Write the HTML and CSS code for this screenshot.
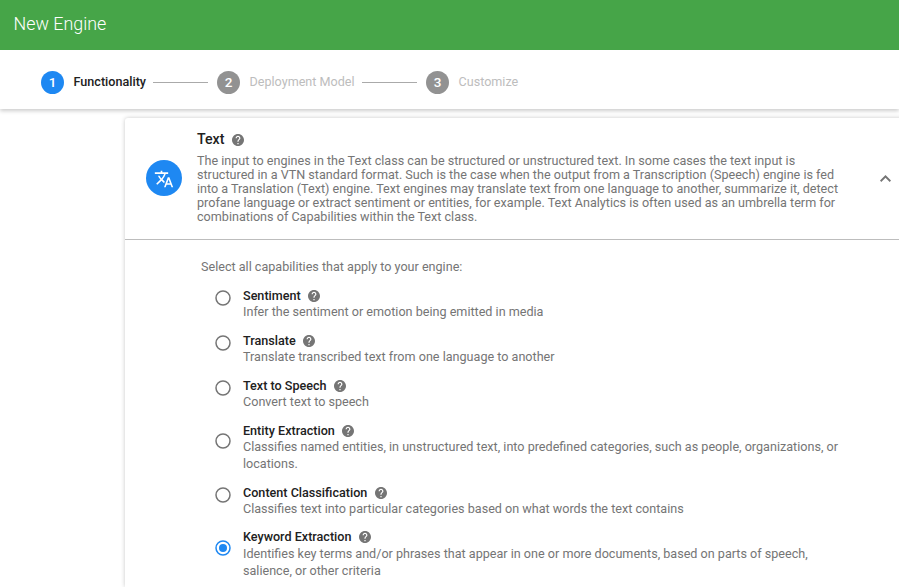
FILE: index.html
```html
<!DOCTYPE html>
<html lang="en">
<head>
<meta charset="utf-8">
<title>New Engine</title>
<link rel="stylesheet" href="styles.css">
</head>
<body>
<svg width="0" height="0" class="defs">
  <symbol id="help" viewBox="2 2 20 20"><path d="M12 2C6.48 2 2 6.48 2 12s4.48 10 10 10 10-4.48 10-10S17.52 2 12 2zm1 17h-2v-2h2v2zm2.07-7.75l-.9.92C13.45 12.9 13 13.5 13 15h-2v-.5c0-1.1.45-2.1 1.17-2.83l1.24-1.26c.37-.36.59-.86.59-1.41 0-1.1-.9-2-2-2s-2 .9-2 2H8c0-2.21 1.79-4 4-4s4 1.79 4 4c0 .88-.36 1.68-.93 2.25z"/></symbol>
</svg>
<header class="topbar"><h1>New Engine</h1></header>
<nav class="stepper">
  <span class="num active">1</span><span class="label current">Functionality</span><span class="line"></span>
  <span class="num">2</span><span class="label deploy">Deployment Model</span><span class="line"></span>
  <span class="num">3</span><span class="label">Customize</span>
</nav>
<main class="card">
  <section class="summary">
    <div class="avatar"><svg viewBox="0 0 24 24"><path d="M12.87 15.07l-2.54-2.51.03-.03c1.74-1.94 2.98-4.17 3.71-6.53H17V4h-7V2H8v2H1v1.99h11.17C11.5 7.92 10.44 9.75 9 11.35 8.07 10.32 7.3 9.19 6.69 8h-2c.73 1.63 1.73 3.17 2.98 4.56l-5.09 5.02L4 19l5-5 3.11 3.11.76-2.04zM18.5 10h-2L12 22h2l1.12-3h4.75L21 22h2l-4.5-12zm-2.62 7l1.62-4.33L19.12 17h-3.24z"/></svg></div>
    <div class="intro">
      <h2><span>Text</span><svg class="help"><use href="#help"/></svg></h2>
      <p>The input to engines in the Text class can be structured or unstructured text. In some cases the text input is<br>structured in a VTN standard format. Such is the case when the output from a Transcription (Speech) engine is fed<br>into a Translation (Text) engine. Text engines may translate text from one language to another, summarize it, detect<br>profane language or extract sentiment or entities, for example. Text Analytics is often used as an umbrella term for<br>combinations of Capabilities within the Text class.</p>
    </div>
    <svg class="chevron" viewBox="6 8 12 7.4"><path d="M12 8l-6 6 1.41 1.41L12 10.83l4.59 4.58L18 14z"/></svg>
  </section>
  <section class="capabilities">
    <p class="prompt">Select all capabilities that apply to your engine:</p>
    <div class="option"><svg class="radio" viewBox="0 0 16 16"><circle cx="8" cy="8" r="7"/></svg><div><h3><span>Sentiment</span><svg class="help"><use href="#help"/></svg></h3><p>Infer the sentiment or emotion being emitted in media</p></div></div>
    <div class="option"><svg class="radio" viewBox="0 0 16 16"><circle cx="8" cy="8" r="7"/></svg><div><h3><span>Translate</span><svg class="help"><use href="#help"/></svg></h3><p>Translate transcribed text from one language to another</p></div></div>
    <div class="option"><svg class="radio" viewBox="0 0 16 16"><circle cx="8" cy="8" r="7"/></svg><div><h3><span>Text to Speech</span><svg class="help"><use href="#help"/></svg></h3><p>Convert text to speech</p></div></div>
    <div class="option tall"><svg class="radio" viewBox="0 0 16 16"><circle cx="8" cy="8" r="7"/></svg><div><h3><span>Entity Extraction</span><svg class="help"><use href="#help"/></svg></h3><p>Classifies named entities, in unstructured text, into predefined categories, such as people, organizations, or<br>locations.</p></div></div>
    <div class="option"><svg class="radio" viewBox="0 0 16 16"><circle cx="8" cy="8" r="7"/></svg><div><h3><span>Content Classification</span><svg class="help"><use href="#help"/></svg></h3><p>Classifies text into particular categories based on what words the text contains</p></div></div>
    <div class="option tall last"><svg class="radio checked" viewBox="0 0 16 16"><circle cx="8" cy="8" r="7"/><circle class="dot" cx="8" cy="8" r="4"/></svg><div><h3><span>Keyword Extraction</span><svg class="help"><use href="#help"/></svg></h3><p>Identifies key terms and/or phrases that appear in one or more documents, based on parts of speech,<br>salience, or other criteria</p></div></div>
  </section>
</main>
</body>
</html>
```
FILE: styles.css
```css
* { box-sizing: border-box; }
html, body { height: 100%; }
body {
  margin: 0;
  display: flex;
  flex-direction: column;
  overflow: hidden;
  background: #fff;
  color: #212121;
  font-family: Roboto, sans-serif;
  font-size: 12.6px;
}
h1, h2, h3, p { margin: 0; }
.defs { display: none; }
.topbar {
  flex: none;
  height: 50px;
  padding: 0 13.5px 3px;
  display: flex;
  align-items: center;
  background: #46a548;
  color: #fff;
}
h1 { font-size: 17.9px; font-weight: 350; }
.stepper {
  flex: none;
  height: 59px;
  padding: 5px 0 0 41px;
  display: flex;
  align-items: center;
  background: #fff;
  box-shadow: 0 2px 4px rgba(0, 0, 0, .2);
  clip-path: inset(0 0 -10px 0);
  z-index: 1;
}
.num {
  width: 23px;
  height: 23px;
  border-radius: 50%;
  background: #929292;
  color: #fff;
  font-size: 13.5px;
  font-weight: 500;
  line-height: 23px;
  text-align: center;
}
.num.active { background: #1e88f2; }
.label { margin: -2px 0 0 9.5px; color: #bdbdbd; white-space: nowrap; }
.label.current { width: 72.5px; color: #212121; font-weight: 500; }
.label.deploy { width: 105.5px; }
.line { width: 55px; height: 1px; margin: 0 9px 0 7px; background: #aaa; }
.card {
  flex: 1;
  min-height: 0;
  width: 790px;
  margin: 9px 0 0 125px;
  border-radius: 3px 3px 0 0;
  background: #fff;
  box-shadow: 0 0 4px rgba(0, 0, 0, .22);
}
.summary {
  height: 122px;
  padding: 11px 0 0 21px;
  display: flex;
  border-bottom: 1px solid #bdbdbd;
}
.avatar {
  width: 36px;
  height: 36px;
  margin-top: 31px;
  border-radius: 50%;
  background: #1e88f2;
  display: grid;
  place-items: center;
}
.avatar svg { width: 20px; height: 20px; margin-top: 1px; fill: #fff; }
.intro { width: 683px; margin-left: 15px; white-space: nowrap; }
h2 { display: flex; align-items: center; gap: 7.5px; height: 19px; font-size: 14.2px; font-weight: 500; }
.intro p { margin-top: 6px; line-height: 14px; color: #757575; }
.help { width: 12px; height: 12px; fill: #757575; }
h2 .help { margin-top: 3px; }
.chevron { width: 11px; height: 7px; margin-top: 46px; fill: #757575; }
.capabilities { height: 347px; overflow: hidden; padding: 19px 0 0 76px; color: #757575; white-space: nowrap; }
.prompt { line-height: 15px; margin-bottom: 13px; }
.option { display: flex; height: 45px; margin-left: 14px; }
.option.tall { height: 62px; }
.option.last { height: 50px; margin-top: -1px; }
.option p { line-height: 17px; }
.last p { padding-top: 1px; }
h3 {
  display: flex;
  align-items: center;
  gap: 7.5px;
  height: 16px;
  color: #212121;
  font-size: 12.6px;
  font-weight: 500;
}
h3 .help { margin-top: 1px; }
.radio {
  width: 16px;
  height: 16px;
  margin: 3px 12px 0 0;
  fill: none;
  stroke: #757575;
  stroke-width: 1.5px;
}
.tall .radio { margin-top: 11px; }
.last .radio { margin-top: 12px; }
.radio.checked { stroke: #1e88f2; }
.radio .dot { fill: #1e88f2; stroke: none; }
```
